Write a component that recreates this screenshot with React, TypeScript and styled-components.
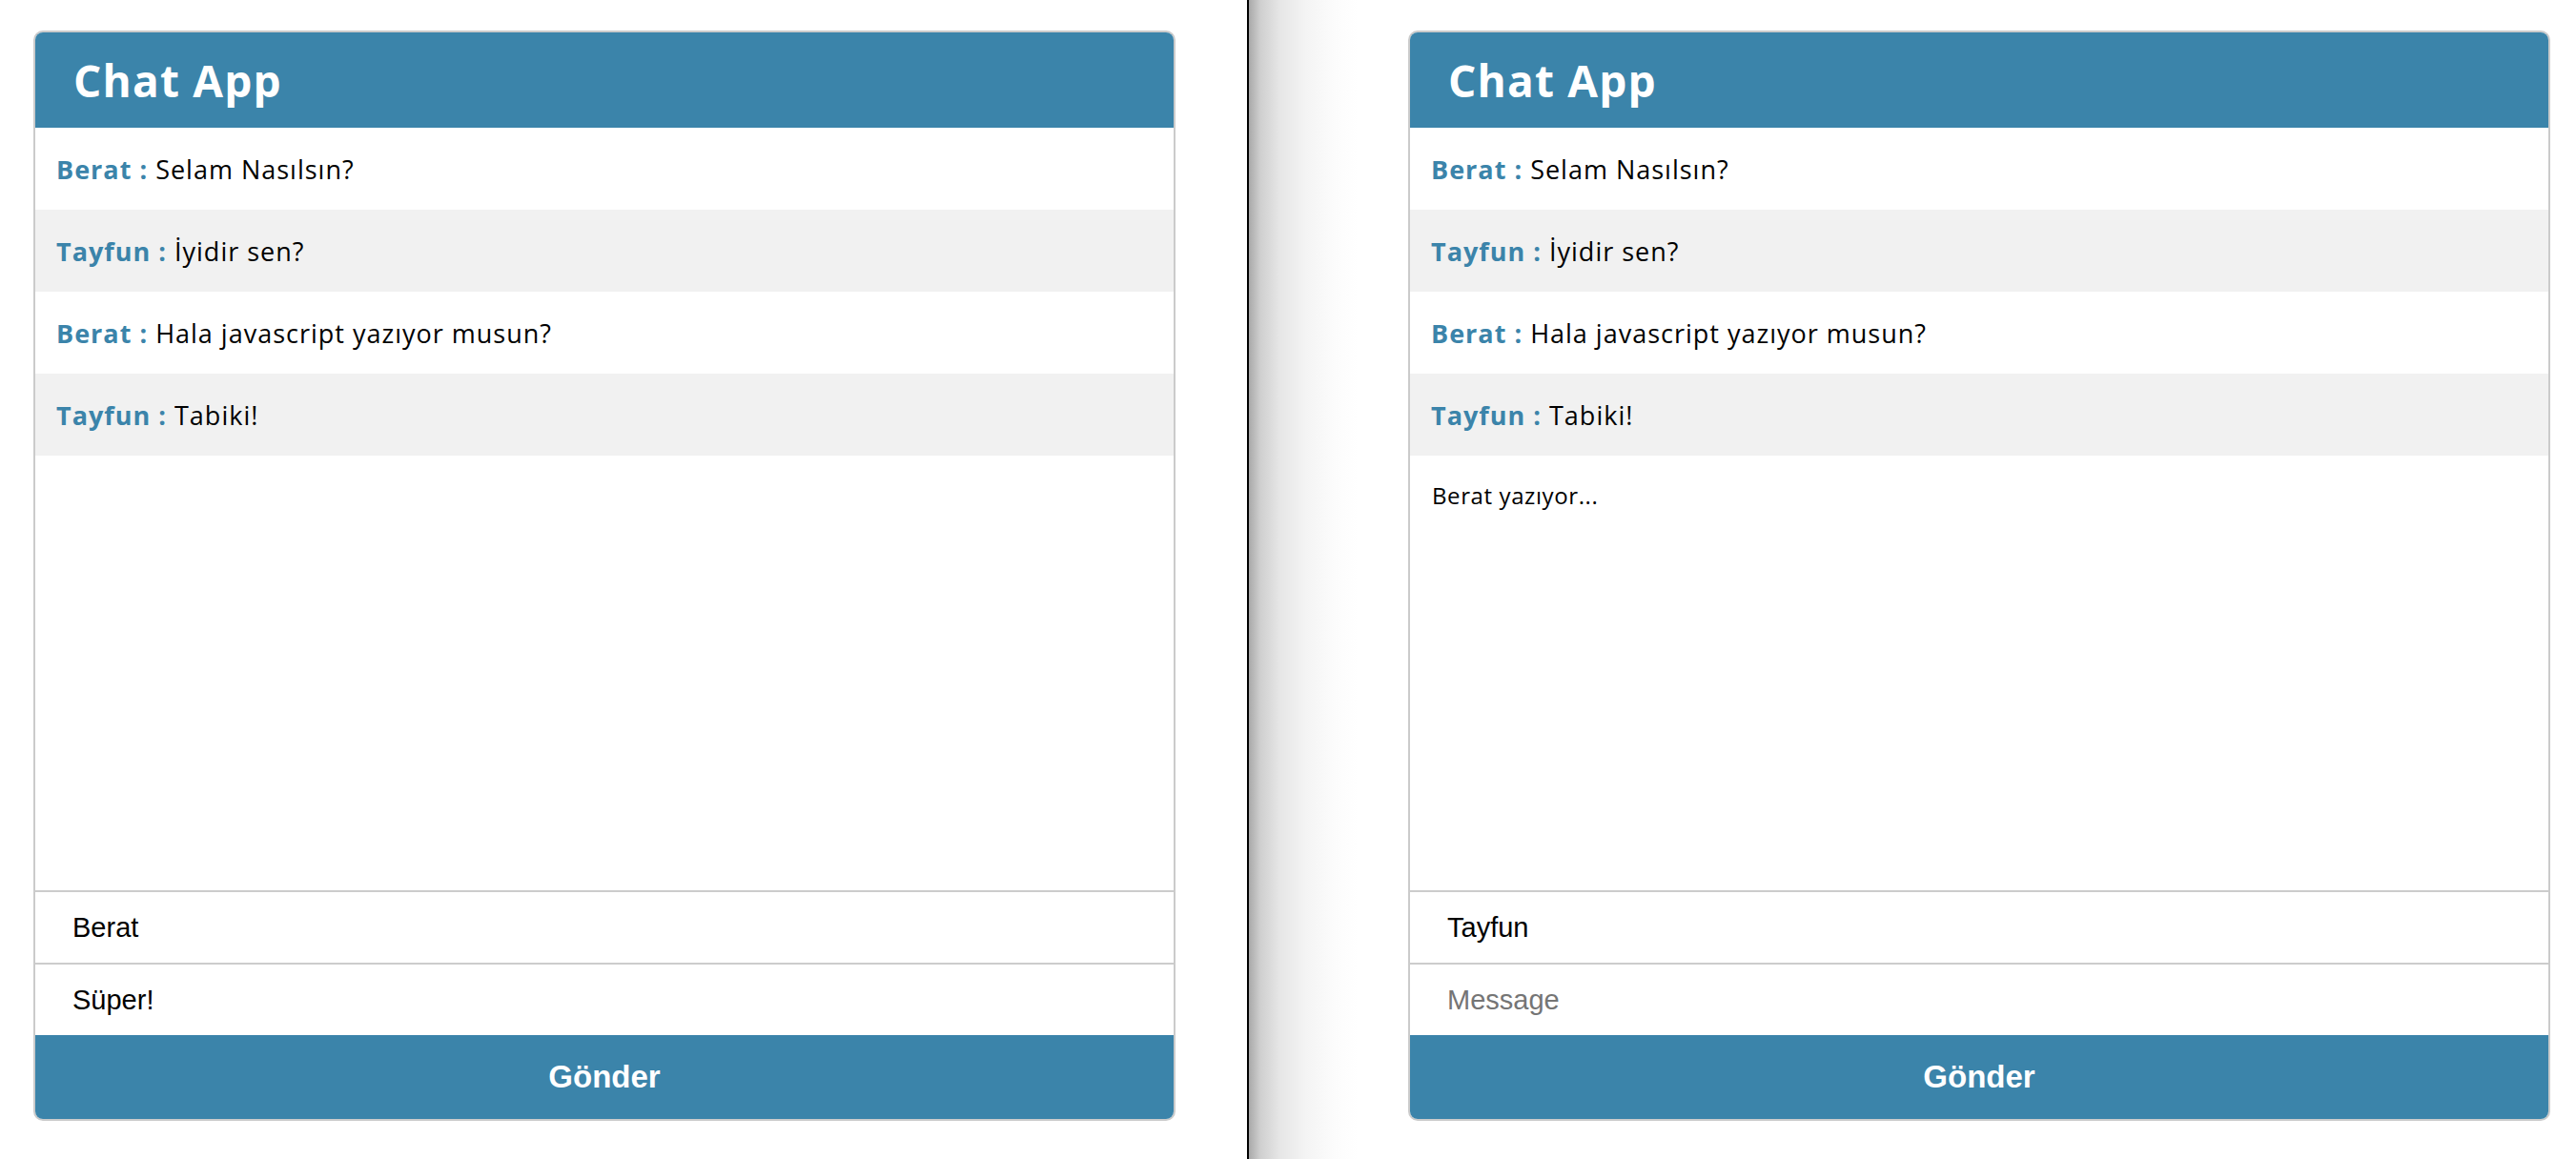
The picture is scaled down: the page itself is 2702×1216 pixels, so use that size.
import React from "react";
import styled, { createGlobalStyle } from "styled-components";

const GlobalStyle = createGlobalStyle`
  html, body { margin: 0; padding: 0; background: #ffffff; }
  * { box-sizing: border-box; }
`;

const BLUE = "rgb(59, 132, 170)";
const TEXT_FONT = `"Open Sans", "Noto Sans", sans-serif`;

const Screen = styled.div`
  display: flex;
  width: 2702px;
  height: 1216px;
  overflow: hidden;
`;

const Pane = styled.div<{ $offset: number; $shaded?: boolean }>`
  flex: ${(p) => (p.$shaded ? "1 1 auto" : "0 0 1308px")};
  padding: 32px 0 0 ${(p) => p.$offset}px;
  background: ${(p) =>
    p.$shaded
      ? "linear-gradient(to right, #a9a9a9 0px, #cfcfcf 12px, #e6e6e6 32px, #f4f4f4 60px, #fcfcfc 90px, #ffffff 115px)"
      : "#ffffff"};
`;

const Divider = styled.div`
  flex: 0 0 2px;
  background: #000;
`;

const Card = styled.div`
  width: 1198px;
  border: 2px solid #cbcbcb;
  border-radius: 10px;
  overflow: hidden;
  display: flex;
  flex-direction: column;
  background: #fff;
`;

const Header = styled.div`
  height: 100px;
  background: ${BLUE};
  display: flex;
  align-items: center;
  padding: 0 40px;
  color: #fff;
  font-family: ${TEXT_FONT};
  font-weight: 700;
  font-size: 46px;
  letter-spacing: 1.2px;
`;

const Messages = styled.div`
  height: 800px;
  display: flex;
  flex-direction: column;
`;

const Row = styled.div<{ $alt: boolean }>`
  height: 86px;
  flex: 0 0 86px;
  display: flex;
  align-items: center;
  padding: 0 22px;
  background: ${(p) => (p.$alt ? "#f1f1f1" : "#ffffff")};
  font-family: ${TEXT_FONT};
  font-size: 27px;
  letter-spacing: 1px;
  color: #000;
  white-space: pre;
`;

const Name = styled.span`
  color: ${BLUE};
  font-weight: 700;
`;

const Typing = styled.div`
  padding: 25px 23px 0;
  font-family: ${TEXT_FONT};
  font-size: 24px;
  letter-spacing: 0.6px;
  color: #000;
`;

const Field = styled.input`
  display: block;
  width: 100%;
  border: none;
  border-top: 2px solid #cccccc;
  outline: none;
  height: 76px;
  padding: 0 39px;
  font-family: "Liberation Sans", Arial, sans-serif;
  font-size: 29px;
  color: #000;
  background: #fff;
  &::placeholder { color: #757575; }
`;

const SendButton = styled.button`
  height: 88px;
  border: none;
  background: ${BLUE};
  color: #fff;
  font-family: "Liberation Sans", Arial, sans-serif;
  font-weight: 700;
  font-size: 33px;
  cursor: pointer;
`;

type Msg = { user: string; text: string };

const messages: Msg[] = [
  { user: "Berat", text: "Selam Nasılsın?" },
  { user: "Tayfun", text: "İyidir sen?" },
  { user: "Berat", text: "Hala javascript yazıyor musun?" },
  { user: "Tayfun", text: "Tabiki!" },
];

function Chat({ name, message, typing }: { name: string; message: string; typing?: string }) {
  return (
    <Card>
      <Header>Chat App</Header>
      <Messages>
        {messages.map((m, i) => (
          <Row key={i} $alt={i % 2 === 1}>
            <Name>{m.user} : </Name>
            {m.text}
          </Row>
        ))}
        {typing && <Typing>{typing}</Typing>}
      </Messages>
      <Field readOnly value={name} />
      <Field readOnly value={message} placeholder="Message" />
      <SendButton>Gönder</SendButton>
    </Card>
  );
}

export default function App() {
  return (
    <>
      <GlobalStyle />
      <Screen>
        <Pane $offset={35}>
          <Chat name="Berat" message="Süper!" />
        </Pane>
        <Divider />
        <Pane $offset={167} $shaded>
          <Chat name="Tayfun" message="" typing="Berat yazıyor..." />
        </Pane>
      </Screen>
    </>
  );
}
